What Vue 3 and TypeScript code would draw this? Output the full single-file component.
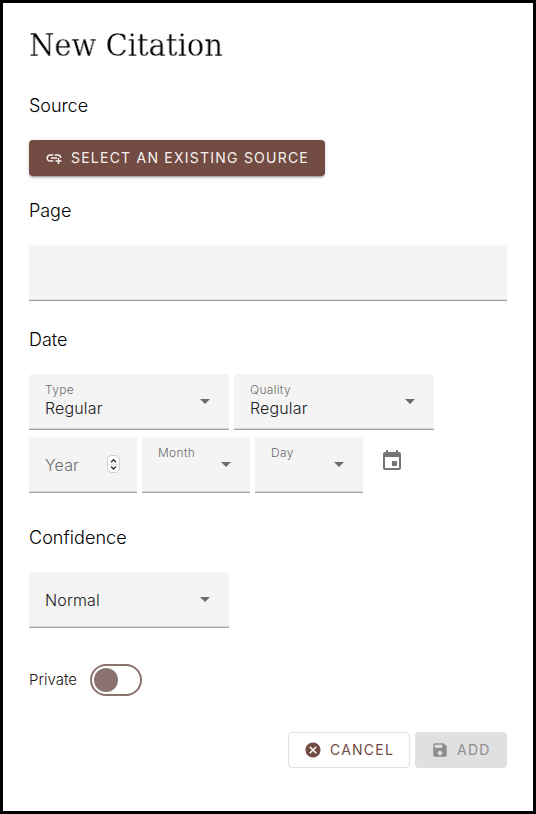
<script setup lang="ts">
import { ref } from 'vue'

interface Field {
  id: string
  label?: string
  value?: string
  kind: 'select' | 'number'
  size: 'wide' | 'small'
}

const typeRow: Field[] = [
  { id: 'type', label: 'Type', value: 'Regular', kind: 'select', size: 'wide' },
  { id: 'quality', label: 'Quality', value: 'Regular', kind: 'select', size: 'wide' },
]
const dateRow: Field[] = [
  { id: 'year', label: 'Year', kind: 'number', size: 'small' },
  { id: 'month', label: 'Month', kind: 'select', size: 'small' },
  { id: 'day', label: 'Day', kind: 'select', size: 'small' },
]
const isPrivate = ref(false)
const page = ref('')
</script>

<template>
  <main class="dialog">
    <h2 class="title"><span class="title-text">New Citation</span></h2>

    <h4 class="heading source">Source</h4>
    <button class="button raised" type="button">
      <svg class="icon" viewBox="0 0 24 24"><path d="M8 11h8v2H8zM20.1 12H22c0-2.76-2.24-5-5-5h-4v1.9h4c1.71 0 3.1 1.39 3.1 3.1zM3.9 12c0-1.71 1.39-3.1 3.1-3.1h4V7H7c-2.76 0-5 2.24-5 5s2.24 5 5 5h4v-1.9H7c-1.71 0-3.1-1.39-3.1-3.1zM19 12h-2v3h-3v2h3v3h2v-3h3v-2h-3z" /></svg>
      <span>SELECT AN EXISTING SOURCE</span>
    </button>

    <h4 class="heading page">Page</h4>
    <input v-model="page" class="field text-input" type="text" />

    <h4 class="heading date">Date</h4>
    <div class="row">
      <div v-for="f in typeRow" :key="f.id" class="field" :class="f.size">
        <div class="content">
          <span class="label">{{ f.label }}</span>
          <span class="value">{{ f.value }}</span>
        </div>
        <svg class="arrow" viewBox="0 0 10 5"><path d="M0 0h10L5 5z" /></svg>
      </div>
    </div>
    <div class="row second">
      <div v-for="f in dateRow" :key="f.id" class="field" :class="[f.size, f.kind]">
        <template v-if="f.kind === 'number'">
          <span class="placeholder">{{ f.label }}</span>
          <span class="spinner">
            <svg viewBox="0 0 12 18"><path d="M3.2 7 6 4.2 8.8 7M3.2 11.8 6 14.6l2.8-2.8" /><path class="split" d="M0 9.4h12" /></svg>
          </span>
        </template>
        <template v-else>
          <div class="content"><span class="label">{{ f.label }}</span></div>
          <svg class="arrow" viewBox="0 0 10 5"><path d="M0 0h10L5 5z" /></svg>
        </template>
      </div>
      <svg class="calendar" viewBox="0 0 24 24"><path d="M17 12h-5v5h5v-5zM16 1v2H8V1H6v2H5c-1.11 0-1.99.9-1.99 2L3 19c0 1.1.89 2 2 2h14c1.1 0 2-.9 2-2V5c0-1.1-.9-2-2-2h-1V1h-2zm3 18H5V8h14v11z" /></svg>
    </div>

    <h4 class="heading confidence">Confidence</h4>
    <div class="field wide confidence-field">
      <span class="value single">Normal</span>
      <svg class="arrow" viewBox="0 0 10 5"><path d="M0 0h10L5 5z" /></svg>
    </div>

    <div class="private">
      <span>Private</span>
      <button class="switch" :class="{ on: isPrivate }" type="button" role="switch" :aria-checked="isPrivate" @click="isPrivate = !isPrivate">
        <span class="knob"></span>
      </button>
    </div>

    <div class="actions">
      <button class="button outlined" type="button">
        <svg class="icon" viewBox="0 0 24 24"><path d="M12 2C6.47 2 2 6.47 2 12s4.47 10 10 10 10-4.47 10-10S17.53 2 12 2zm5 13.59L15.59 17 12 13.41 8.41 17 7 15.59 10.59 12 7 8.41 8.41 7 12 10.59 15.59 7 17 8.41 13.41 12 17 15.59z" /></svg>
        <span>CANCEL</span>
      </button>
      <button class="button disabled" type="button" disabled>
        <svg class="icon" viewBox="0 0 24 24"><path d="M17 3H5c-1.11 0-2 .9-2 2v14c0 1.1.89 2 2 2h14c1.1 0 2-.9 2-2V7l-4-4zm-5 16c-1.66 0-3-1.34-3-3s1.34-3 3-3 3 1.34 3 3-1.34 3-3 3zm3-10H5V5h10v4z" /></svg>
        <span>ADD</span>
      </button>
    </div>
  </main>
</template>

<style>
body { margin: 0; background: #fff; }
</style>

<style scoped>
* { box-sizing: border-box; }
.dialog {
  width: 536px;
  height: 814px;
  padding: 22px 26px 0;
  border: 3px solid #000;
  background: #fff;
  color: #000;
  font-family: Inter, "Liberation Sans", sans-serif;
  overflow: hidden;
}
.title {
  height: 40px;
  margin: 0;
  font: 300 31.5px/40px "Roboto Slab", "DejaVu Serif", serif;
  white-space: nowrap;
}
.title-text {
  display: inline-block;
  transform: scaleX(0.92);
  transform-origin: 0 50%;
  will-change: transform;
  -webkit-text-stroke: 0.35px #fff;
}
.heading { height: 24px; margin: 0; font-size: 18px; font-weight: 300; line-height: 24px; letter-spacing: -0.05px; }
.source { margin-top: 29px; margin-bottom: 22px; }
.page { margin-top: 23px; margin-bottom: 22px; }
.date { margin-top: 27px; margin-bottom: 22px; }
.confidence { margin-top: 33px; margin-bottom: 22px; letter-spacing: 0.05px; }
.button {
  display: flex;
  align-items: center;
  height: 36px;
  padding: 0 16px;
  gap: 8px;
  border: 0;
  border-radius: 4px;
  font: 400 14px/36px Inter, "Liberation Sans", sans-serif;
  letter-spacing: 1.23px;
  white-space: nowrap;
}
.icon { width: 18px; height: 18px; flex: none; fill: currentColor; }
.raised {
  width: 296px;
  background: #724b42;
  color: #f7f2f0;
  box-shadow: 0 3px 1px -2px rgba(0, 0, 0, .2), 0 2px 2px rgba(0, 0, 0, .14), 0 1px 5px rgba(0, 0, 0, .12);
}
.outlined { width: 122px; padding: 0 15px; border: 1px solid #e0e0e0; background: #fff; color: #724b42; }
.disabled { width: 92px; background: #e0e0e0; color: #8e8e8e; }
.field {
  display: flex;
  height: 56px;
  border: 0;
  border-bottom: 1px solid #a4a4a4;
  border-radius: 4px 4px 0 0;
  background: #f4f4f4;
  box-shadow: inset 0 -1px #d8d8d8;
}
.text-input { display: block; width: 100%; padding: 0 16px; font: 16px Inter, sans-serif; outline: 0; border-color: #989898; box-shadow: inset 0 -1px #e3e3e3; }
.row { display: flex; gap: 5px; }
.second { margin-top: 7px; }
.wide { width: 200px; padding: 0 19px 0 16px; }
.small { width: 108px; padding: 0 19px 0 16px; }
.content { display: flex; flex-direction: column; padding-top: 8px; }
.label { color: #6c6c6c; font-size: 12px; font-weight: 350; line-height: 16px; letter-spacing: 0.3px; }
.value { color: #202020; font-size: 16px; font-weight: 350; line-height: 21px; letter-spacing: 0.15px; }
.single { line-height: 56px; letter-spacing: 0.15px; }
.arrow { width: 10px; height: 5px; margin: 25px 0 0 auto; fill: #6b6b6b; }
.number { padding-right: 17px; justify-content: space-between; }
.placeholder { color: #6c6c6c; font-size: 16px; font-weight: 350; line-height: 56px; letter-spacing: 0.15px; }
.spinner {
  width: 13px;
  height: 18px;
  margin-top: 18px;
  border: 1px solid #cfcfcf;
  border-radius: 5px;
  background: #fff;
}
.spinner svg { display: block; width: 11px; height: 16px; fill: none; stroke: #333; stroke-width: 1.6; }
.spinner .split { stroke: #ddd; stroke-width: 1; }
.calendar { width: 24px; height: 24px; margin: 12px 0 0 12px; fill: #757575; }
.private { display: flex; align-items: center; height: 32px; margin-top: 36px; font-size: 15px; font-weight: 350; color: #1f1412; }
.private > span { width: 61px; margin-top: -1px; letter-spacing: 0; }
.switch { display: flex; align-items: center; width: 52px; height: 32px; padding: 0 2px; border: 2px solid #8a736e; border-radius: 16px; background: #fff; }
.knob { width: 24px; height: 24px; border-radius: 50%; background: #8a736e; }
.on .knob { margin-left: auto; }
.actions { display: flex; justify-content: flex-end; gap: 5px; margin-top: 36px; }
</style>
